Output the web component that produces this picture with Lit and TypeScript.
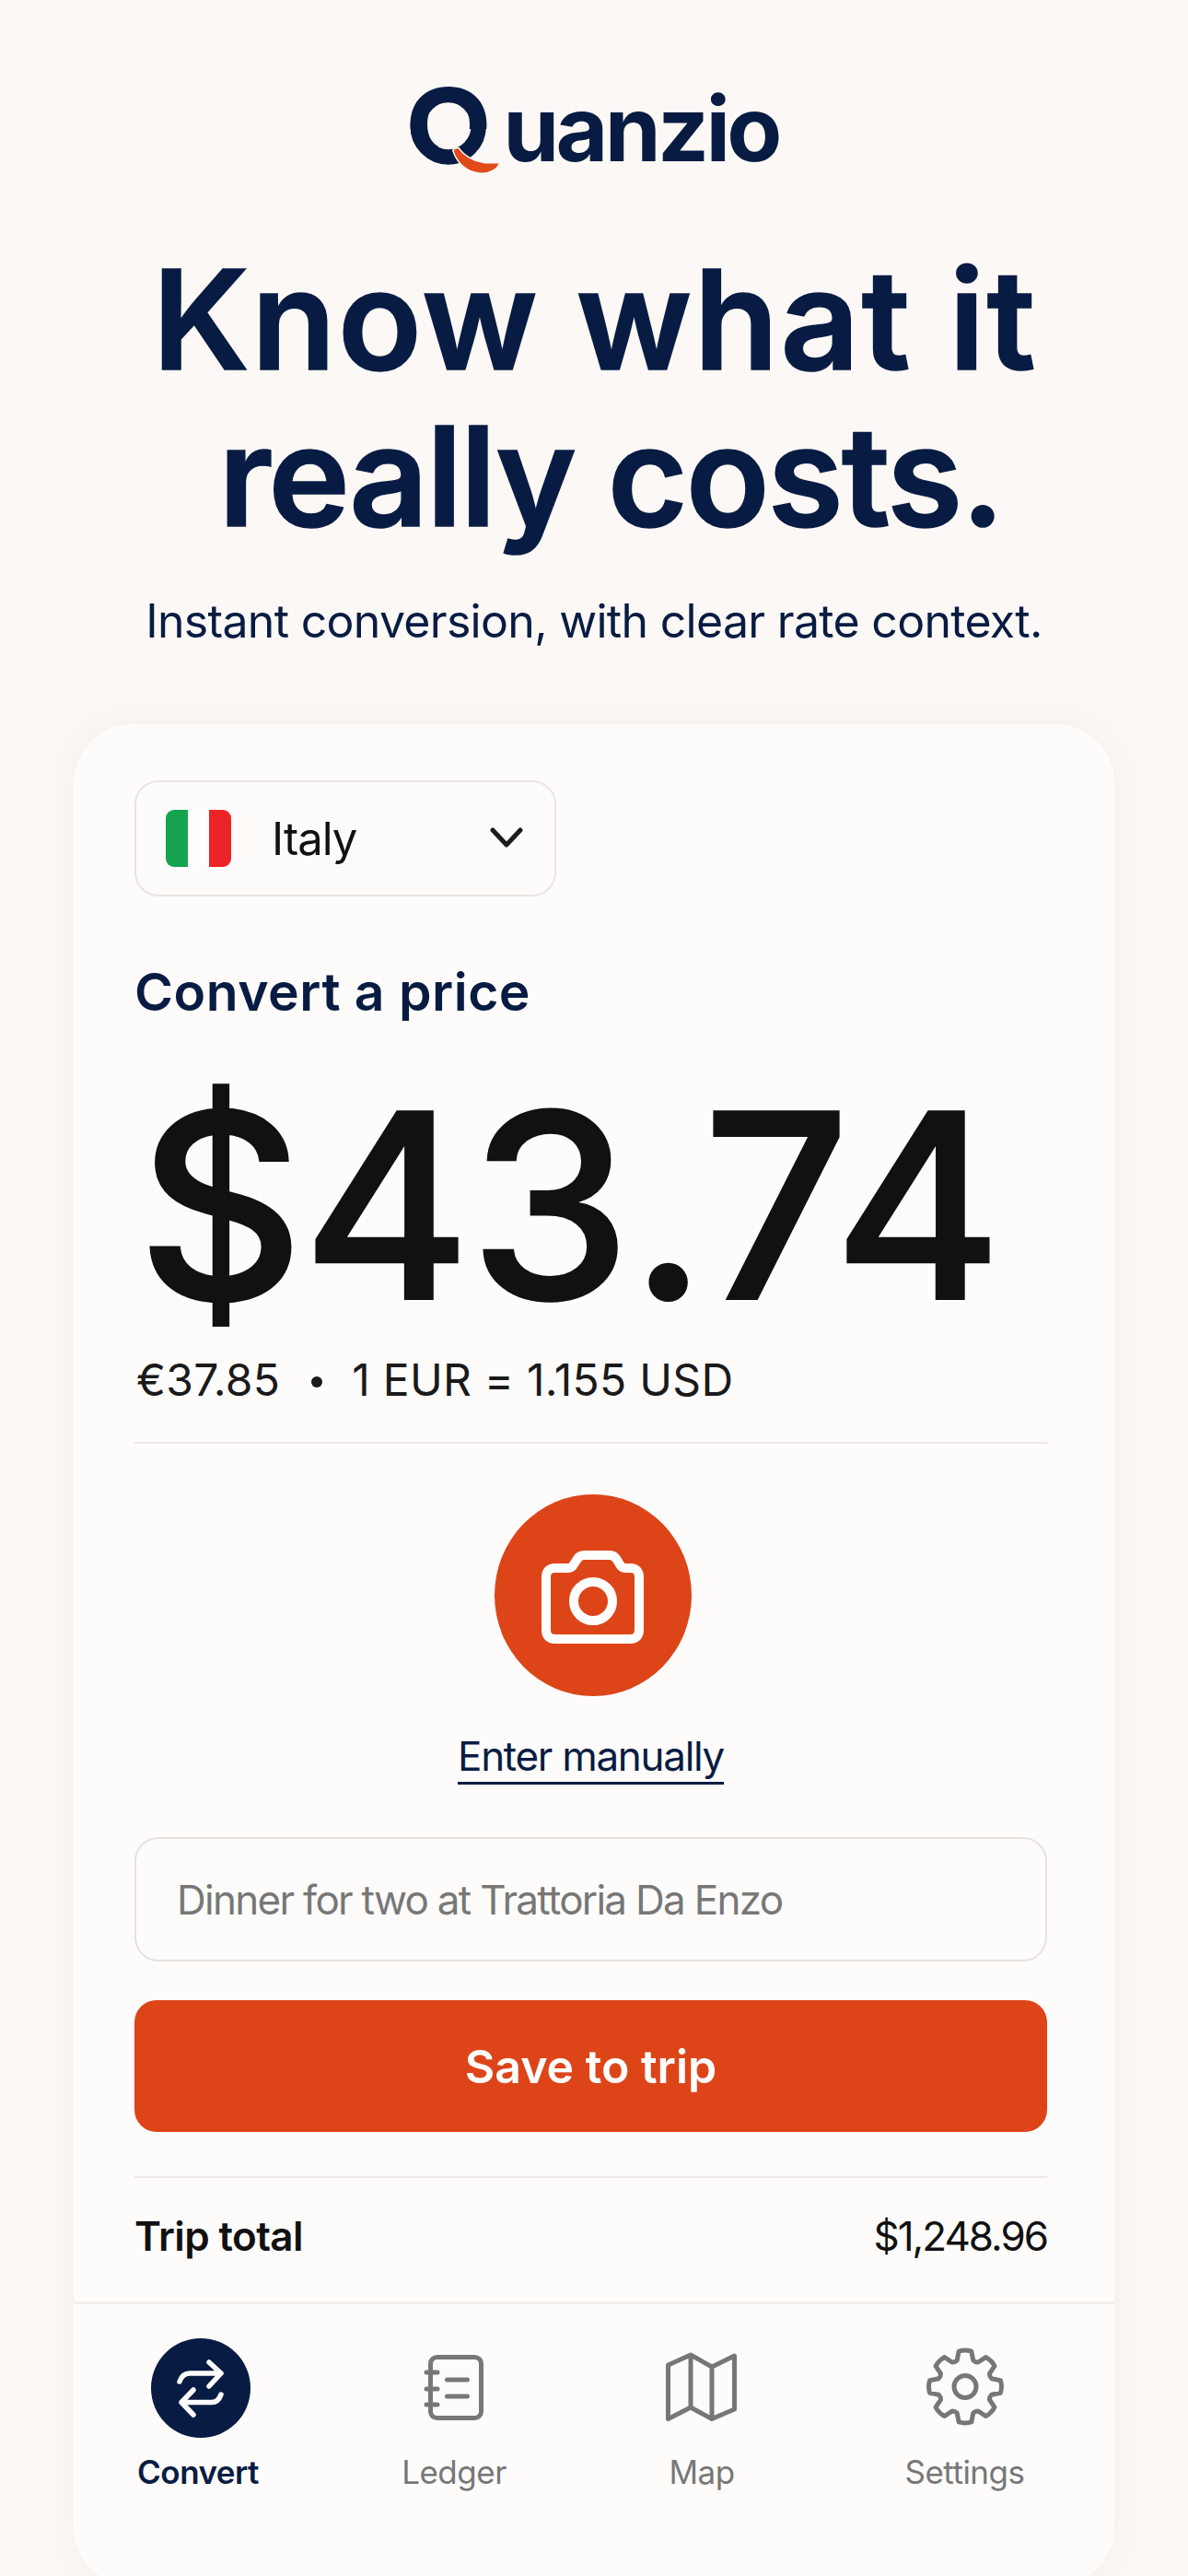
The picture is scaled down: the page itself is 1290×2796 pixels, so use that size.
import { LitElement, html, css } from "lit";
import { customElement } from "lit/decorators.js";

function gearPath(cx: number, cy: number, R: number, r: number): string {
  const p = (rad: number, deg: number) => {
    const a = ((deg - 90) * Math.PI) / 180;
    return `${(cx + rad * Math.cos(a)).toFixed(2)} ${(cy + rad * Math.sin(a)).toFixed(2)}`;
  };
  let d = "";
  for (let k = 0; k < 8; k++) {
    const a = k * 45;
    d += k === 0 ? `M${p(R, a - 10)}` : `L${p(R, a - 10)}`;
    d += ` Q${p(R + 1.5, a)} ${p(R, a + 10)}`;
    d += ` L${p(r, a + 17)} Q${p(r - 1.5, a + 22.5)} ${p(r, a + 28)} `;
  }
  return d + "Z";
}

@customElement("app-root")
export class AppRoot extends LitElement {
  static styles = css`
    :host {
      display: block;
      width: 1290px;
      height: 2796px;
      overflow: hidden;
      background: #fcf8f5;
      font-family: Inter, "Liberation Sans", sans-serif;
      color: #111;
    }
    .page { display: flex; flex-direction: column; align-items: center; padding-top: 80px; }
    .logo {
      position: relative;
      display: flex;
      align-items: baseline;
      height: 110px;
      margin-left: -1px;
      color: #081c43;
      font-weight: 700;
      line-height: 110px;
    }
    .logo .q { font-size: 110px; width: 91px; margin: 0 15px 0 -3px; display: inline-block; transform: scaleX(1.11); transform-origin: 0 50%; }
    .logo .rest { font-size: 98px; letter-spacing: -3.7px; }
    .logo svg { position: absolute; left: -3px; top: 0; overflow: visible; }
    h1 {
      margin: 72px 0 0;
      font-size: 150px;
      line-height: 170px;
      font-weight: 600;
      color: #081c43;
      text-align: center;
      -webkit-text-stroke: 1.5px #081c43;
    }
    h1 span { display: block; }
    h1 .l1 { letter-spacing: 2px; margin-left: 2px; }
    h1 .l2 { letter-spacing: -2.3px; margin-left: 36px; }
    .sub { margin-top: 40px; font-size: 50px; line-height: 64px; color: #081c43; letter-spacing: -0.7px; }
    .card {
      box-sizing: border-box;
      width: 1130px;
      height: 2021px;
      margin-top: 80px;
      background: #fefcfb;
      border-radius: 64px;
      box-shadow: 0 0 36px rgba(70, 50, 30, 0.05);
      display: flex;
      flex-direction: column;
    }
    .body { padding: 61px 73px 0 66px; display: flex; flex-direction: column; flex: 1; }
    .select {
      box-sizing: border-box;
      width: 458px;
      height: 126px;
      border: 2px solid #e9e6e2;
      border-radius: 26px;
      display: flex;
      align-items: center;
      padding: 0 34px 0 32px;
      font-size: 49px;
      letter-spacing: -1px;
    }
    .flag {
      width: 71px;
      height: 62px;
      border-radius: 9px;
      background: linear-gradient(90deg, #16a34f 0 33.5%, #fdfdfd 33.5% 66.5%, #ec2427 66.5% 100%);
      margin-right: 44px;
      flex: none;
    }
    .select .name { flex: 1; }
    h2 { margin: 69px 0 0; font-size: 57px; line-height: 70px; font-weight: 600; color: #081c43; letter-spacing: 0.5px; }
    .amount {
      margin: 47px 0 0 3px;
      font-size: 280px;
      line-height: 300px;
      font-weight: 500;
      color: #111;
      letter-spacing: -2px;
      -webkit-text-stroke: 2px #111;
    }
    .amount .pt { letter-spacing: -5px; }
    .rate { margin: 11px 0 0 2px; display: flex; font-size: 48px; line-height: 56px; color: #1a1a1a; letter-spacing: 0.3px; }
    .rate .dot { width: 12px; height: 12px; border-radius: 50%; background: #1a1a1a; margin: 24px 32px 0 34px; }
    .rule { height: 2px; background: #ece9e6; flex: none; }
    .rule.a { margin-top: 39px; }
    .capture { display: flex; flex-direction: column; align-items: center; }
    .shutter { width: 214px; height: 219px; border-radius: 50%; background: #dd4519; margin: 55px 0 0 4px; display: block; }
    .manual {
      margin-top: 37px;
      font-size: 44px;
      line-height: 56px;
      color: #081c43;
      letter-spacing: -1.3px;
      border-bottom: 3px solid #081c43;
    }
    .field {
      box-sizing: border-box;
      height: 135px;
      margin-top: 57px;
      border: 2px solid #e6e3df;
      border-radius: 26px;
      padding: 0 44px;
      display: flex;
      align-items: center;
      font-size: 44px;
      letter-spacing: -1.7px;
      color: #777;
    }
    .save {
      height: 143px;
      margin-top: 42px;
      background: #dd4519;
      border-radius: 24px;
      color: #fff;
      font-size: 50px;
      font-weight: 600;
      display: flex;
      align-items: center;
      justify-content: center;
    }
    .rule.b { margin-top: 48px; }
    .total { display: flex; justify-content: space-between; margin-top: 35px; font-size: 44px; line-height: 56px; }
    .total b { font-weight: 600; letter-spacing: -0.6px; }
    .total span { letter-spacing: -2px; }
    .nav {
      border-top: 3px solid #f1eeeb;
      height: 309px;
      box-sizing: border-box;
      display: grid;
      grid-template-columns: 270px 286px 252px 319px;
      flex: none;
    }
    .tab { display: flex; flex-direction: column; align-items: center; font-size: 35px; letter-spacing: -0.5px; color: #777; }
    .tab .icon { height: 128px; margin-top: 27px; display: flex; align-items: center; justify-content: center; }
    .tab .lab { margin-top: 5px; line-height: 44px; }
    .tab.on { color: #081c43; font-weight: 600; }
    .tab svg { display: block; }
    .disc { width: 108px; height: 108px; border-radius: 50%; background: #081c43; margin-left: 6px; }
    .book { margin-left: 3px; }
  `;

  render() {
    const gear = gearPath(44, 42.5, 39, 30);
    return html`
      <div class="page">
        <div class="logo">
          <span class="q">Q</span><span class="rest">uanzio</span>
          <svg width="1" height="1">
            <rect x="36" y="60" width="68" height="52" fill="#fcf8f5"></rect>
            <ellipse cx="46.7" cy="56.7" rx="33" ry="33.7" fill="none" stroke="#081c43" stroke-width="16.5"></ellipse>
            <path d="M51.7 83.3 Q54 80 58.3 80.7 C63 88 72 94 86.7 96.7 L102.7 96.7 C100 104 92 108.3 83.3 108.3 C70 108 57 100 51.7 83.3Z" fill="#e2491b" stroke="#fcf8f5" stroke-width="1.5"></path>
          </svg>
        </div>
        <h1><span class="l1">Know what it</span><span class="l2">really costs.</span></h1>
        <div class="sub">Instant conversion, with clear rate context.</div>
        <div class="card">
          <div class="body">
            <div class="select">
              <div class="flag"></div>
              <span class="name">Italy</span>
              <svg width="36" height="24" viewBox="0 0 36 24" fill="none" stroke="#1c1c1c" stroke-width="5" stroke-linecap="round" stroke-linejoin="round">
                <path d="M3 3 L18 19 L33 3"></path>
              </svg>
            </div>
            <h2>Convert a price</h2>
            <div class="amount">$43<span class="pt">.</span>74</div>
            <div class="rate"><span>€37.85</span><i class="dot"></i><span>1 EUR = 1.155 USD</span></div>
            <div class="rule a"></div>
            <div class="capture">
              <svg class="shutter" viewBox="0 0 214 219" preserveAspectRatio="xMidYMin meet" fill="none" stroke="#fff" stroke-width="10" stroke-linejoin="round">
                <path d="M66 80 H80 Q84 80 86 76 L90 70 Q92 66 98 66 H125 Q130 66 133 71 L136 76 Q138 80 142 80 H147 Q157 80 157 90 V147 Q157 157 147 157 H66 Q56 157 56 147 V90 Q56 80 66 80Z"></path>
                <circle cx="107" cy="116" r="21"></circle>
              </svg>
              <div class="manual">Enter manually</div>
            </div>
            <div class="field">Dinner for two at Trattoria Da Enzo</div>
            <div class="save">Save to trip</div>
            <div class="rule b"></div>
            <div class="total"><b>Trip total</b><span>$1,248.96</span></div>
          </div>
          <div class="nav">
            <div class="tab on">
              <div class="icon">
                <svg class="disc" viewBox="0 0 108 108" fill="none" stroke="#fff" stroke-width="5.5" stroke-linecap="round" stroke-linejoin="round">
                  <path d="M31 47 Q34 38 42 38 H76 M63 26 L76 38 L63 52"></path>
                  <path d="M76 61 Q73 69.5 66 69.5 H33 M46 56 L33 69.5 L46 83"></path>
                </svg>
              </div>
              <div class="lab">Convert</div>
            </div>
            <div class="tab">
              <div class="icon">
                <svg class="book" width="70" height="76" viewBox="0 0 70 76" fill="none" stroke="#777" stroke-width="5" stroke-linecap="round" stroke-linejoin="round">
                  <rect x="7.5" y="4.5" width="55" height="66" rx="7"></rect>
                  <path d="M3 21 H15 M3 39 H15 M3 56 H15"></path>
                  <path d="M25.5 29 H47.5 M25.5 47 H47.5"></path>
                </svg>
              </div>
              <div class="lab">Ledger</div>
            </div>
            <div class="tab">
              <div class="icon">
                <svg width="84" height="82" viewBox="0 0 84 82" fill="none" stroke="#777" stroke-width="5" stroke-linejoin="round">
                  <path d="M5.5 16 L30 5 L53 18 L77.5 6 V64 L53 74.5 L30 62 L5.5 74.5Z M30 5 V62 M53 18 V74.5"></path>
                </svg>
              </div>
              <div class="lab">Map</div>
            </div>
            <div class="tab">
              <div class="icon">
                <svg width="88" height="88" viewBox="0 0 88 88" fill="none" stroke="#777" stroke-width="5" stroke-linejoin="round">
                  <path d="${gear}"></path>
                  <circle cx="44" cy="42.5" r="12"></circle>
                </svg>
              </div>
              <div class="lab">Settings</div>
            </div>
          </div>
        </div>
      </div>
    `;
  }
}
